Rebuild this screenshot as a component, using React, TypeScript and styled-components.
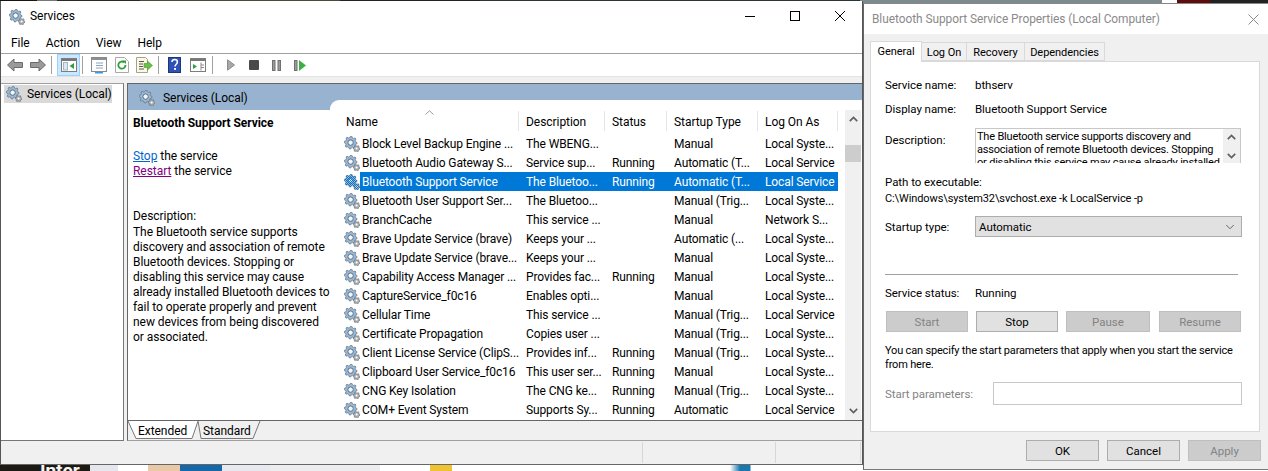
import React from "react";
import styled, { createGlobalStyle } from "styled-components";
import { ChevronDown } from "lucide-react";

const GlobalStyle = createGlobalStyle`
  html, body {
    margin: 0;
    padding: 0;
    overflow: hidden;
  }
  * {
    box-sizing: border-box;
  }
`;

const Desktop = styled.div`
  width: 1268px;
  height: 471px;
  display: flex;
  overflow: hidden;
  font-family: Roboto, "Liberation Sans", sans-serif;
  font-size: 12px;
  letter-spacing: -0.05px;
  color: #000;
  background:
    linear-gradient(
        90deg,
        #17150e 0 37px,
        #777 37px 57px,
        #2b2a22 57px 140px,
        #4a4a3c 140px 340px,
        #1f2420 340px 480px,
        #2c3336 480px 860px,
        #7d8b90 860px 1162px,
        #fff 1162px 1177px,
        #5e0c0c 1177px 1210px,
        #222 1210px
      )
      top / 100% 5px no-repeat,
    #fff;
`;

const MainColumn = styled.div`
  width: 863px;
  flex: none;
  display: flex;
  flex-direction: column;
  padding-top: 1px;
`;

const Window = styled.div`
  height: 464px;
  display: flex;
  flex-direction: column;
  background: #fff;
  border-left: 1px solid #555;
  border-right: 1px solid #555;
  border-bottom: 1px solid #666;
`;

const Wallpaper = styled.div`
  height: 6px;
  overflow: hidden;
  padding-left: 40px;
  color: #f4f4f4;
  font-weight: 700;
  font-size: 19px;
  line-height: 12px;
  background: linear-gradient(
    90deg,
    #1c1a12 0 90px,
    #e6e6ee 90px 118px,
    #fff 118px 148px,
    #e9c9a8 148px 180px,
    #1668a8 180px 222px,
    #e8e8f0 222px 270px,
    #ededf0 270px 380px,
    #fff 380px 430px,
    #f0c430 430px 452px,
    #fff 452px 730px,
    #1b78ad 740px 750px,
    #fff 751px
  );
`;

const TitleBar = styled.div`
  height: 32px;
  display: flex;
  align-items: center;
  padding-left: 8px;
  gap: 5px;
`;

const TitleText = styled.span`
  margin-bottom: 2px;
`;

const WinControls = styled.div`
  margin-left: auto;
  display: flex;
  height: 100%;
`;

const WinButton = styled.div`
  width: 45px;
  display: flex;
  align-items: center;
  justify-content: center;
  padding-bottom: 2px;
`;

const MenuBar = styled.div`
  height: 21px;
  display: flex;
  align-items: center;
  gap: 16px;
  padding: 0 0 1px 10px;
  border-bottom: 1px solid #a0a0a0;
`;

const Toolbar = styled.div`
  height: 22px;
  display: flex;
  align-items: center;
  padding-left: 2px;
`;

const ToolButton = styled.div<{ $active?: boolean }>`
  width: 23px;
  height: 22px;
  display: flex;
  align-items: center;
  justify-content: center;
  background: ${(p) => (p.$active ? "#cce8ff" : "transparent")};
  border: 1px solid ${(p) => (p.$active ? "#99d1ff" : "transparent")};
`;

const ToolSep = styled.div<{ $left: number; $right: number }>`
  width: 1px;
  height: 18px;
  background: #a0a0a0;
  margin: 0 ${(p) => p.$right}px 0 ${(p) => p.$left}px;
`;

const ToolGap = styled.div`
  height: 7px;
  background: #f0f0f0;
  border-top: 1px solid #e3e3e3;
`;

const Panes = styled.div`
  height: 358px;
  display: flex;
  background: #f0f0f0;
`;

const TreePane = styled.div`
  width: 123px;
  flex: none;
  background: #fff;
  border-top: 1px solid #a0a0a0;
  border-right: 1px solid #777;
  border-bottom: 1px solid #777;
  padding: 1px 0 0 3px;
`;

const TreeItem = styled.div`
  width: 108px;
  height: 18px;
  display: flex;
  align-items: center;
  gap: 5px;
  padding-left: 2px;
  white-space: nowrap;
  background: #d9d9d9;
`;

const ServicesPane = styled.div`
  flex: 1;
  min-width: 0;
  margin-left: 3px;
  display: flex;
  flex-direction: column;
  border-top: 1px solid #666;
  border-left: 1px solid #666;
  border-bottom: 1px solid #a0a0a0;
`;

const PaneBody = styled.div`
  flex: 1;
  min-height: 0;
  display: flex;
  background: #fff;
  border-bottom: 1px solid #666;
`;

const InfoColumn = styled.div`
  width: 202px;
  flex: none;
`;

const PaneBand = styled.div`
  height: 26px;
  display: flex;
  align-items: center;
  gap: 8px;
  padding: 1px 0 0 11px;
  background: #98b3d0;
`;

const InfoBody = styled.div`
  padding: 6px 0 0 5px;
  line-height: 15px;
  white-space: nowrap;
`;

const InfoTitle = styled.div`
  font-weight: 700;
  margin-bottom: 18px;
  line-height: 15px;
`;

const InfoLink = styled.a<{ $visited?: boolean }>`
  color: ${(p) => (p.$visited ? "#800080" : "#0066cc")};
  text-decoration: underline;
`;

const InfoLabel = styled.div`
  margin: 30px 0 1px;
`;

const ListColumn = styled.div`
  flex: 1;
  min-width: 0;
  background: #98b3d0;
  padding-top: 16px;
  display: flex;
`;

const ListPanel = styled.div`
  flex: 1;
  background: #fff;
  border-top-left-radius: 9px;
  padding: 10px 0 0 14px;
  display: flex;
  min-width: 0;
`;

const ListTable = styled.div`
  width: 494px;
  flex: none;
`;

const ScrollBar = styled.div`
  width: 16px;
  margin-left: 7px;
  background: #f0f0f0;
  display: flex;
  flex-direction: column;
  align-items: center;
  padding: 6px 0;
`;

const ScrollThumb = styled.div`
  width: 16px;
  height: 17px;
  margin-top: 23px;
  margin-bottom: auto;
  background: #cdcdcd;
`;

const HeaderRow = styled.div`
  height: 24px;
  display: grid;
  grid-template-columns: 175px 86px 62px 91px 80px;
`;

const HeaderCell = styled.div<{ $pad: number }>`
  position: relative;
  height: 20px;
  margin-top: 1px;
  display: flex;
  align-items: center;
  padding: 2px 0 0 ${(p) => p.$pad}px;
  border-right: 1px solid #e5e5e5;
`;

const SortMark = styled.svg`
  position: absolute;
  left: 81px;
  top: -1px;
`;

const ServiceRow = styled.div`
  height: 19px;
  display: grid;
  grid-template-columns: 16px 159px 86px 62px 91px 80px;
  align-items: center;
`;

const IconCell = styled.div`
  height: 16px;
`;

const Cell = styled.div<{ $selected?: boolean; $pad: number }>`
  height: 19px;
  line-height: 20px;
  letter-spacing: -0.12px;
  white-space: nowrap;
  overflow: hidden;
  padding-left: ${(p) => p.$pad}px;
  background: ${(p) => (p.$selected ? "#0078d7" : "transparent")};
  color: ${(p) => (p.$selected ? "#fff" : "#000")};
`;

const TabStrip = styled.div`
  height: 19px;
  display: flex;
  background: #f0f0f0;
`;

const ViewTab = styled.div<{ $width: number; $pad: number }>`
  position: relative;
  width: ${(p) => p.$width}px;
  height: 18px;
  padding-left: ${(p) => p.$pad}px;
  line-height: 21px;
`;

const TabShape = styled.svg`
  position: absolute;
  left: 0;
  top: 0;
`;

const TabLabel = styled.span`
  position: relative;
`;

const StatusBar = styled.div`
  flex: 1;
  display: flex;
  background: #f0f0f0;
  padding: 1px 0;
`;

const StatusCell = styled.div<{ $width: number }>`
  width: ${(p) => p.$width}px;
  border-right: 1px solid #d7d7d7;
`;

/* dialog */

const Dialog = styled.div`
  flex: 1;
  min-width: 0;
  height: 467px;
  margin-top: 3px;
  display: flex;
  flex-direction: column;
  background: #f0f0f0;
  border-left: 1px solid #666;
  border-top: 1px solid #888;
  border-bottom: 1px solid #777;
  font-size: 11.5px;
`;

const DialogTitle = styled.div`
  height: 30px;
  flex: none;
  display: flex;
  align-items: center;
  justify-content: space-between;
  padding: 0 9px 0 8px;
  background: #fff;
  color: #8a8a8a;
  font-size: 11.9px;
`;

const TabRow = styled.div`
  display: flex;
  align-items: flex-end;
  height: 20px;
  margin: 7px 0 0 6px;
`;

const DialogTab = styled.div<{ $width: number; $active?: boolean }>`
  width: ${(p) => p.$width}px;
  height: ${(p) => (p.$active ? 21 : 19)}px;
  margin-bottom: ${(p) => (p.$active ? -1 : 0)}px;
  padding: ${(p) => (p.$active ? "0 0 2px" : "1px 0 0")};
  z-index: ${(p) => (p.$active ? 1 : 0)};
  display: flex;
  align-items: center;
  justify-content: center;
  background: ${(p) => (p.$active ? "#fff" : "#f0f0f0")};
  border: 1px solid #d9d9d9;
  border-bottom: ${(p) => (p.$active ? "none" : "1px solid #d9d9d9")};
  border-left-width: ${(p) => (p.$active ? 1 : 0)}px;
  font-size: 11px;
`;

const TabPanel = styled.div`
  height: 371px;
  margin: 0 8px 0 6px;
  padding: 14px 0 0 14px;
  background: #fff;
  border: 1px solid #d9d9d9;
`;

const FieldRow = styled.div<{ $top?: number; $height: number; $start?: boolean }>`
  display: flex;
  align-items: ${(p) => (p.$start ? "flex-start" : "center")};
  height: ${(p) => p.$height}px;
  margin-top: ${(p) => p.$top ?? 0}px;
  white-space: nowrap;
`;

const FieldLabel = styled.div<{ $disabled?: boolean; $top?: number }>`
  width: 90px;
  flex: none;
  padding-top: ${(p) => p.$top ?? 0}px;
  color: ${(p) => (p.$disabled ? "#838383" : "#000")};
`;

const PathText = styled.span`
  font-size: 11px;
  letter-spacing: -0.1px;
`;

const DescBox = styled.div`
  width: 266px;
  height: 35px;
  display: flex;
  overflow: hidden;
  border: 1px solid #c8c8c8;
  border-bottom: none;
`;

const DescText = styled.div`
  flex: 1;
  padding: 1px 0 0 1px;
  line-height: 13px;
  font-size: 11px;
  letter-spacing: -0.2px;
  white-space: nowrap;
`;

const DescScroll = styled.div`
  width: 17px;
  background: #f0f0f0;
  display: flex;
  flex-direction: column;
  align-items: center;
  justify-content: space-between;
  padding: 5px 0 4px;
`;

const SelectBox = styled.div`
  width: 267px;
  height: 21px;
  display: flex;
  align-items: center;
  justify-content: space-between;
  padding: 0 4px 0 3px;
  background: #e1e1e1;
  border: 1px solid #adadad;
`;

const Rule = styled.div`
  width: 353px;
  height: 1px;
  margin-top: 37px;
  background: #a0a0a0;
`;

const ActionRow = styled.div`
  display: flex;
  margin: 10px 0 0 1px;
`;

const DlgButton = styled.button<{ $width: number; $gap?: number }>`
  width: ${(p) => p.$width}px;
  height: 21px;
  margin-right: ${(p) => p.$gap ?? 0}px;
  padding: 0;
  font-family: inherit;
  font-size: 11.5px;
  color: ${(p) => (p.disabled ? "#838383" : "#000")};
  background: ${(p) => (p.disabled ? "#cccccc" : "#e1e1e1")};
  border: 1px solid ${(p) => (p.disabled ? "#bfbfbf" : "#adadad")};
`;

const HelpText = styled.div`
  width: 355px;
  margin-top: 12px;
  line-height: 14px;
  height: 28px;
  font-size: 11px;
  letter-spacing: -0.18px;
`;

const ParamInput = styled.div`
  width: 249px;
  height: 23px;
  margin-left: 18px;
  background: #fff;
  border: 1px solid #c8c8c8;
`;

const DialogFooter = styled.div`
  display: flex;
  justify-content: flex-end;
  gap: 8px;
  margin: 8px 7px 0 0;
`;

/* drawings */

const gearPoints = (cx: number, cy: number, r: number, teeth: number) => {
  const pts: string[] = [];
  const total = teeth * 4;
  for (let i = 0; i < total; i++) {
    const a = (i / total) * Math.PI * 2;
    const rad = i % 4 < 2 ? r : r * 0.78;
    pts.push(`${(cx + rad * Math.cos(a)).toFixed(2)},${(cy + rad * Math.sin(a)).toFixed(2)}`);
  }
  return pts.join(" ");
};

const bigGear = gearPoints(6.6, 6.6, 6.4, 8);
const smallGear = gearPoints(12.6, 12.6, 3.3, 6);

const GearIcon = ({ selected }: { selected?: boolean }) => (
  <svg width="16" height="16" viewBox="0 0 16 16" style={{ display: "block", flex: "none" }}>
    <polygon points={bigGear} fill="#9fb8d0" stroke="#5f7a94" strokeWidth="0.8" />
    <circle cx="6.6" cy="6.6" r="2.7" fill="#f2f6fa" stroke="#54708a" strokeWidth="1" />
    <polygon points={smallGear} fill="#aab0b6" stroke="#666e76" strokeWidth="0.7" />
    <circle cx="12.6" cy="12.6" r="1" fill="#fff" />
    {selected && (
      <>
        <defs>
          <pattern id="dither" width="2" height="2" patternUnits="userSpaceOnUse">
            <rect width="1" height="1" fill="#0078d7" />
            <rect x="1" y="1" width="1" height="1" fill="#0078d7" />
          </pattern>
        </defs>
        <polygon points={bigGear} fill="url(#dither)" />
        <polygon points={smallGear} fill="url(#dither)" />
      </>
    )}
  </svg>
);

const NavArrow = ({ flip }: { flip?: boolean }) => (
  <svg width="16" height="14" viewBox="0 0 16 14" style={flip ? { transform: "scaleX(-1)" } : undefined}>
    <path d="M0.5 7 7 1v3.5h8.5v5H7V13z" fill="#9a9a9a" stroke="#6b6b6b" />
  </svg>
);

const PaneIcon = () => (
  <svg width="16" height="16" viewBox="0 0 16 16">
    <rect x="0.5" y="1.5" width="15" height="13" fill="#fff" stroke="#7d7d7d" />
    <rect x="1" y="2" width="14" height="2" fill="#777" />
    <rect x="2.5" y="5.5" width="4" height="7.5" fill="#dbe8f2" stroke="#9fb6c8" />
    <path d="M13 6v6L8.5 9z" fill="#2f9e44" />
  </svg>
);

const ListIcon = () => (
  <svg width="16" height="18" viewBox="0 0 16 18">
    <rect x="0.5" y="1.5" width="15" height="14" fill="#fff" stroke="#8a8a8a" />
    <rect x="1" y="2" width="14" height="2" fill="#8f8f8f" />
    <path d="M5 7h7M5 9.500h7M5 12h7" stroke="#8aa3ba" strokeWidth="1" />
    <rect x="4" y="16" width="8" height="1.5" fill="#3b9ae1" />
  </svg>
);

const RefreshIcon = () => (
  <svg width="14" height="16" viewBox="0 0 14 16">
    <path d="M0.5 0.5h9l4 4v11h-13z" fill="#fff" stroke="#a8a8a8" />
    <path d="M10.5 8a3.6 3.6 0 1 1-1.2-2.6" fill="none" stroke="#2e9e3a" strokeWidth="1.8" />
    <path d="M7.5 3.5h3.5v3.5z" fill="#2e9e3a" />
  </svg>
);

const ExportIcon = () => (
  <svg width="17" height="16" viewBox="0 0 17 16">
    <path d="M0.5 0.5h9l2 2v13h-11z" fill="#fdf8e4" stroke="#a8a08a" />
    <path d="M3 4.5h5M3 7h4M3 9.5h4M3 12h5" stroke="#555" strokeWidth="1" />
    <path d="M8 6.5h3.5V4l5 4.500-5 4.500v-2.500H8z" fill="#6cc04a" stroke="#4a9a30" strokeWidth="0.6" />
  </svg>
);

const HelpIcon = () => (
  <svg width="13" height="16" viewBox="0 0 13 16">
    <rect x="0.5" y="0.5" width="12" height="15" fill="#2f51b5" stroke="#1f357a" />
    <path d="M4 5c0-3.200 5.400-3.200 5.400 0 0 2.300-2.400 2.100-2.400 4.600" fill="none" stroke="#fff" strokeWidth="1.500" />
    <rect x="6.100" y="11" width="1.900" height="1.900" fill="#fff" />
  </svg>
);

const ActionPaneIcon = () => (
  <svg width="16" height="16" viewBox="0 0 16 16">
    <rect x="0.5" y="1.500" width="15" height="13" fill="#fff" stroke="#7d7d7d" />
    <rect x="1" y="2" width="14" height="2" fill="#777" />
    <path d="M3 7v5l4-2.500z" fill="#2f9e44" />
    <path d="M11 5.500v8M11 8h3M11 10.500h3" stroke="#8a8a8a" strokeWidth="1" />
  </svg>
);

const PlayIcon = () => (
  <svg width="8" height="12" viewBox="0 0 8 12">
    <path d="M0.500 0.800 7.500 6l-7 5.200z" fill="#a8a8a8" stroke="#8c8c8c" />
  </svg>
);

const StopIcon = () => (
  <svg width="10" height="10" viewBox="0 0 10 10">
    <rect width="10" height="10" rx="1" fill="#4a4a4a" />
  </svg>
);

const PauseIcon = () => (
  <svg width="9" height="11" viewBox="0 0 9 11">
    <rect x="0.500" y="0.500" width="2.500" height="10" fill="#9a9a9a" stroke="#707070" />
    <rect x="6" y="0.500" width="2.500" height="10" fill="#9a9a9a" stroke="#707070" />
  </svg>
);

const ResumeIcon = () => (
  <svg width="12" height="11" viewBox="0 0 12 11">
    <rect x="0.500" y="0.500" width="2.500" height="10" fill="#9a9a9a" stroke="#707070" />
    <path d="M5 0v11l7-5.500z" fill="#3cb043" />
  </svg>
);

const Chevron = ({ down }: { down?: boolean }) => (
  <svg width="9" height="6" viewBox="0 0 9 6" style={{ display: "block", flex: "none" }}>
    <path d={down ? "M0.800 0.800 4.500 4.500 8.200 0.800" : "M0.800 5.200 4.500 1.500 8.200 5.200"} fill="none" stroke="#606060" strokeWidth="1.700" />
  </svg>
);

type Service = { name: string; desc: string; status: string; startup: string; logon: string; selected?: boolean };

const services: Service[] = [
  { name: "Block Level Backup Engine ...", desc: "The WBENG...", status: "", startup: "Manual", logon: "Local Syste..." },
  { name: "Bluetooth Audio Gateway S...", desc: "Service sup...", status: "Running", startup: "Automatic (T...", logon: "Local Service" },
  { name: "Bluetooth Support Service", desc: "The Bluetoo...", status: "Running", startup: "Automatic (T...", logon: "Local Service", selected: true },
  { name: "Bluetooth User Support Ser...", desc: "The Bluetoo...", status: "", startup: "Manual (Trig...", logon: "Local Syste..." },
  { name: "BranchCache", desc: "This service ...", status: "", startup: "Manual", logon: "Network S..." },
  { name: "Brave Update Service (brave)", desc: "Keeps your ...", status: "", startup: "Automatic (...", logon: "Local Syste..." },
  { name: "Brave Update Service (brave...", desc: "Keeps your ...", status: "", startup: "Manual", logon: "Local Syste..." },
  { name: "Capability Access Manager ...", desc: "Provides fac...", status: "Running", startup: "Manual", logon: "Local Syste..." },
  { name: "CaptureService_f0c16", desc: "Enables opti...", status: "", startup: "Manual", logon: "Local Syste..." },
  { name: "Cellular Time", desc: "This service ...", status: "", startup: "Manual (Trig...", logon: "Local Service" },
  { name: "Certificate Propagation", desc: "Copies user ...", status: "", startup: "Manual (Trig...", logon: "Local Syste..." },
  { name: "Client License Service (ClipS...", desc: "Provides inf...", status: "Running", startup: "Manual (Trig...", logon: "Local Syste..." },
  { name: "Clipboard User Service_f0c16", desc: "This user ser...", status: "Running", startup: "Manual", logon: "Local Syste..." },
  { name: "CNG Key Isolation", desc: "The CNG ke...", status: "Running", startup: "Manual (Trig...", logon: "Local Syste..." },
  { name: "COM+ Event System", desc: "Supports Sy...", status: "Running", startup: "Automatic", logon: "Local Service" },
];

const App = () => {
  const rows = services.map((s) => (
    <ServiceRow key={s.name}>
      <IconCell>
        <GearIcon selected={s.selected} />
      </IconCell>
      <Cell $pad={2} $selected={s.selected}>{s.name}</Cell>
      <Cell $pad={7} $selected={s.selected}>{s.desc}</Cell>
      <Cell $pad={7} $selected={s.selected}>{s.status}</Cell>
      <Cell $pad={7} $selected={s.selected}>{s.startup}</Cell>
      <Cell $pad={7} $selected={s.selected}>{s.logon}</Cell>
    </ServiceRow>
  ));

  return (
    <Desktop>
      <GlobalStyle />
      <MainColumn>
        <Window>
          <TitleBar>
            <GearIcon />
            <TitleText>Services</TitleText>
            <WinControls>
              <WinButton>
                <svg width="10" height="10" viewBox="0 0 10 10">
                  <path d="M0 5.500h10" stroke="#000" />
                </svg>
              </WinButton>
              <WinButton>
                <svg width="10" height="10" viewBox="0 0 10 10">
                  <rect x="0.500" y="0.500" width="9" height="9" fill="none" stroke="#000" />
                </svg>
              </WinButton>
              <WinButton>
                <svg width="10" height="10" viewBox="0 0 10 10">
                  <path d="M0 0l10 10M10 0 0 10" stroke="#000" />
                </svg>
              </WinButton>
            </WinControls>
          </TitleBar>
          <MenuBar>
            <span>File</span>
            <span>Action</span>
            <span>View</span>
            <span>Help</span>
          </MenuBar>
          <Toolbar>
            <ToolButton><NavArrow /></ToolButton>
            <ToolButton><NavArrow flip /></ToolButton>
            <ToolSep $left={2} $right={5} />
            <ToolButton $active><PaneIcon /></ToolButton>
            <ToolSep $left={2} $right={4} />
            <ToolButton><ListIcon /></ToolButton>
            <ToolButton><RefreshIcon /></ToolButton>
            <ToolButton><ExportIcon /></ToolButton>
            <ToolSep $left={2} $right={4} />
            <ToolButton><HelpIcon /></ToolButton>
            <ToolButton><ActionPaneIcon /></ToolButton>
            <ToolSep $left={3} $right={6} />
            <ToolButton><PlayIcon /></ToolButton>
            <ToolButton><StopIcon /></ToolButton>
            <ToolButton><PauseIcon /></ToolButton>
            <ToolButton><ResumeIcon /></ToolButton>
          </Toolbar>
          <ToolGap />
          <Panes>
            <TreePane>
              <TreeItem>
                <GearIcon />
                <span>Services (Local)</span>
              </TreeItem>
            </TreePane>
            <ServicesPane>
              <PaneBody>
                <InfoColumn>
                  <PaneBand>
                    <GearIcon />
                    <span>Services (Local)</span>
                  </PaneBand>
                  <InfoBody>
                    <InfoTitle>Bluetooth Support Service</InfoTitle>
                    <div>
                      <InfoLink href="#">Stop</InfoLink> the service
                    </div>
                    <div>
                      <InfoLink href="#" $visited>Restart</InfoLink> the service
                    </div>
                    <InfoLabel>Description:</InfoLabel>
                    <div>
                      The Bluetooth service supports
                      <br />
                      discovery and association of remote
                      <br />
                      Bluetooth devices.  Stopping or
                      <br />
                      disabling this service may cause
                      <br />
                      already installed Bluetooth devices to
                      <br />
                      fail to operate properly and prevent
                      <br />
                      new devices from being discovered
                      <br />
                      or associated.
                    </div>
                  </InfoBody>
                </InfoColumn>
                <ListColumn>
                  <ListPanel>
                    <ListTable>
                      <HeaderRow>
                        <HeaderCell $pad={2}>
                          Name
                          <SortMark width="9" height="5" viewBox="0 0 9 5">
                            <path d="M0.500 4.500 4.500 0.800 8.500 4.500" fill="none" stroke="#9a9a9a" />
                          </SortMark>
                        </HeaderCell>
                        <HeaderCell $pad={7}>Description</HeaderCell>
                        <HeaderCell $pad={7}>Status</HeaderCell>
                        <HeaderCell $pad={7}>Startup Type</HeaderCell>
                        <HeaderCell $pad={7}>Log On As</HeaderCell>
                      </HeaderRow>
                      {rows}
                    </ListTable>
                    <ScrollBar>
                      <Chevron />
                      <ScrollThumb />
                      <Chevron down />
                    </ScrollBar>
                  </ListPanel>
                </ListColumn>
              </PaneBody>
              <TabStrip>
                <ViewTab $width={70} $pad={10}>
                  <TabShape width="71" height="18" viewBox="0 0 71 18">
                    <path d="M0 0 8 17.500H64L70 0" fill="#fff" stroke="#777" />
                  </TabShape>
                  <TabLabel>Extended</TabLabel>
                </ViewTab>
                <ViewTab $width={62} $pad={5}>
                  <TabShape width="63" height="18" viewBox="0 0 63 18">
                    <path d="M0 0 3 17.500H55L62 0" fill="#f0f0f0" stroke="#777" />
                  </TabShape>
                  <TabLabel>Standard</TabLabel>
                </ViewTab>
              </TabStrip>
            </ServicesPane>
          </Panes>
          <StatusBar>
            <StatusCell $width={642} />
            <StatusCell $width={133} />
            <StatusCell $width={85} />
          </StatusBar>
        </Window>
        <Wallpaper>Inter</Wallpaper>
      </MainColumn>

      <Dialog>
        <DialogTitle>
          <span>Bluetooth Support Service Properties (Local Computer)</span>
          <svg width="11" height="11" viewBox="0 0 11 11">
            <path d="M0.500 0.500l10 10M10.500 0.500l-10 10" stroke="#8a8a8a" />
          </svg>
        </DialogTitle>
        <TabRow>
          <DialogTab $width={52} $active>General</DialogTab>
          <DialogTab $width={45}>Log On</DialogTab>
          <DialogTab $width={58}>Recovery</DialogTab>
          <DialogTab $width={80}>Dependencies</DialogTab>
        </TabRow>
        <TabPanel>
          <FieldRow $height={18}>
            <FieldLabel>Service name:</FieldLabel>
            <span>bthserv</span>
          </FieldRow>
          <FieldRow $top={6} $height={18}>
            <FieldLabel>Display name:</FieldLabel>
            <span>Bluetooth Support Service</span>
          </FieldRow>
          <FieldRow $top={10} $height={35} $start>
            <FieldLabel $top={5}>Description:</FieldLabel>
            <DescBox>
              <DescText>
                The Bluetooth service supports discovery and
                <br />
                association of remote Bluetooth devices.  Stopping
                <br />
                or disabling this service may cause already installed
              </DescText>
              <DescScroll>
                <Chevron />
                <Chevron down />
              </DescScroll>
            </DescBox>
          </FieldRow>
          <FieldRow $top={11} $height={16}>Path to executable:</FieldRow>
          <FieldRow $height={16}>
            <PathText>C:\Windows\system32\svchost.exe -k LocalService -p</PathText>
          </FieldRow>
          <FieldRow $top={10} $height={21}>
            <FieldLabel>Startup type:</FieldLabel>
            <SelectBox>
              <span>Automatic</span>
              <ChevronDown size={14} color="#555" strokeWidth={1.5} />
            </SelectBox>
          </FieldRow>
          <Rule />
          <FieldRow $top={10} $height={16}>
            <FieldLabel>Service status:</FieldLabel>
            <span>Running</span>
          </FieldRow>
          <ActionRow>
            <DlgButton $width={82} $gap={8} disabled>Start</DlgButton>
            <DlgButton $width={82} $gap={8}>Stop</DlgButton>
            <DlgButton $width={84} $gap={9} disabled>Pause</DlgButton>
            <DlgButton $width={82} disabled>Resume</DlgButton>
          </ActionRow>
          <HelpText>
            You can specify the start parameters that apply when you start the service from here.
          </HelpText>
          <FieldRow $top={10} $height={23}>
            <FieldLabel $disabled>Start parameters:</FieldLabel>
            <ParamInput />
          </FieldRow>
        </TabPanel>
        <DialogFooter>
          <DlgButton $width={73}>OK</DlgButton>
          <DlgButton $width={73}>Cancel</DlgButton>
          <DlgButton $width={73} disabled>Apply</DlgButton>
        </DialogFooter>
      </Dialog>
    </Desktop>
  );
};

export default App;
